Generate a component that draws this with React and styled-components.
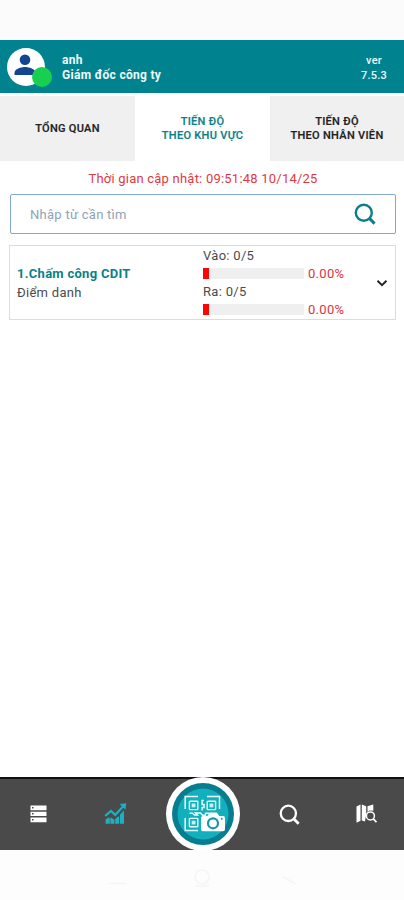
import React from "react";
import styled, { createGlobalStyle } from "styled-components";

const Global = createGlobalStyle`
  * { box-sizing: border-box; }
  body { margin: 0; background: #fff; font-family: Roboto, "Noto Sans", sans-serif; }
`;
const Screen = styled.div`
  width: 404px;
  height: 900px;
  display: flex;
  flex-direction: column;
  background: #fff;
  overflow: hidden;
`;
const StatusBar = styled.div`
  height: 39.5px;
  flex: none;
  background: #fbfbfb;
`;
const Header = styled.header`
  height: 53.5px;
  flex: none;
  display: flex;
  align-items: center;
  background: #00838f;
  color: #eefafa;
  padding: 1px 16px 0 7px;
`;
const Avatar = styled.div`
  position: relative;
  width: 38px;
  height: 38px;
  border-radius: 50%;
  background: #fff;
  svg { display: block; }
`;
const OnlineDot = styled.span`
  position: absolute;
  left: 25px;
  top: 19px;
  width: 20px;
  height: 20px;
  border-radius: 50%;
  background: #18cf50;
`;
const User = styled.div`
  margin-left: 17px;
  flex: 1;
  font-size: 12px;
  font-weight: 700;
  line-height: 15px;
  padding-top: 2px;
  letter-spacing: 0.3px;
`;
const Version = styled.div`
  width: 28px;
  text-align: center;
  font-size: 11px;
  font-weight: 500;
  line-height: 15px;
  padding-top: 2px;
  letter-spacing: 0.2px;
`;
const Tabs = styled.nav`
  flex: none;
  height: 65px;
  margin-top: 3px;
  display: grid;
  grid-template-columns: 135px 135px 134px;
`;
const Tab = styled.div`
  display: flex;
  align-items: center;
  justify-content: center;
  text-align: center;
  background: ${(p) => (p.$active ? "#fff" : "#f0f0f0")};
  color: ${(p) => (p.$active ? "#0b7f88" : "#222")};
  font-size: 11px;
  font-weight: 500;
  line-height: 14px;
  letter-spacing: 0.3px;
  -webkit-text-stroke: 0.2px currentColor;
`;
const Updated = styled.div`
  flex: none;
  height: 33px;
  line-height: 35px;
  padding-left: 2px;
  text-align: center;
  font-size: 13px;
  letter-spacing: 0.22px;
  color: #e2383f;
`;
const Search = styled.div`
  flex: none;
  height: 40px;
  margin: 0 8px 0 10px;
  border: 1px solid #7fa8d2;
  border-radius: 2px;
  display: flex;
  align-items: center;
  justify-content: space-between;
  padding: 0 19px 0 19px;
  font-size: 13px;
  letter-spacing: 0.27px;
  color: #8fa3b5;
  svg { margin-bottom: 1px; }
`;
const Card = styled.div`
  flex: none;
  height: 75px;
  margin: 11px 8px 0 9px;
  border: 1px solid #dcdcdc;
  display: flex;
  align-items: center;
  padding: 0 7px;
`;
const Area = styled.div`
  width: 186px;
  font-size: 13px;
  line-height: 19px;
  letter-spacing: 0.28px;
  color: #4b4b4b;
`;
const AreaName = styled.div`
  font-weight: 700;
  color: #0b7f88;
`;
const Metrics = styled.div`
  flex: 1;
  font-size: 13px;
  line-height: 18px;
  padding-top: 1px;
  letter-spacing: 0.3px;
  color: #4b4b4b;
`;
const MetricRow = styled.div`
  height: 18.5px;
  display: flex;
  align-items: center;
`;
const Bar = styled.div`
  width: 101px;
  height: 11px;
  background: #efefef;
  margin: 0 4px 1px 0;
`;
const Fill = styled.div`
  width: 5.5px;
  height: 11px;
  background: #fb0505;
`;
const Percent = styled.span`
  color: #d9343d;
`;
const Spacer = styled.main`
  flex: 1;
`;
const BottomNav = styled.nav`
  flex: none;
  height: 73px;
  border-top: 2px solid #111;
  background: #4a4a4a;
  display: grid;
  grid-template-columns: 77px 77px 97px 77px 76px;
  align-items: center;
  justify-items: center;
  svg { display: block; }
  > svg { margin-bottom: 2px; }
`;
const Scan = styled.div`
  width: 74px;
  height: 74px;
  margin-top: -2px;
  border-radius: 50%;
  background: #fff;
  display: grid;
  place-items: center;
`;
const SystemNav = styled.div`
  flex: none;
  height: 50px;
  background: #fdfdfd;
  svg { display: block; }
`;

const Magnifier = ({ size, color, weight }) => (
  <svg width={size} height={size} viewBox="0 0 22 22" fill="none" stroke={color} strokeWidth={weight}>
    <circle cx="9.8" cy="9.8" r="8" />
    <path d="M15.4 15.4 20.6 20.6" strokeWidth={weight + 0.5} />
  </svg>
);

const Finder = ({ x, y }) => (
  <g transform={`translate(${x} ${y})`}>
    <rect x="0.7" y="0.7" width="8.4" height="8.4" rx="0.6" fill="none" stroke="#e9feff" strokeWidth="1.4" />
    <rect x="3" y="3" width="3.8" height="3.8" fill="#c4f3f6" />
  </g>
);

const Metric = ({ label, value }) => (
  <>
    <div>{label}</div>
    <MetricRow>
      <Bar><Fill /></Bar>
      <Percent>{value}</Percent>
    </MetricRow>
  </>
);

export default function App() {
  return (
    <Screen>
      <Global />
      <StatusBar />
      <Header>
        <Avatar>
          <svg width="38" height="38" viewBox="0 0 38 38" fill="#12478f">
            <circle cx="18" cy="11.8" r="5.3" />
            <path d="M7.5 27v-2.3c0-3.7 6.5-5.8 10.5-5.8s10.5 2.1 10.5 5.8V27z" />
          </svg>
          <OnlineDot />
        </Avatar>
        <User>
          <div>anh</div>
          <div>Giám đốc công ty</div>
        </User>
        <Version>ver<br />7.5.3</Version>
      </Header>
      <Tabs>
        <Tab>TỔNG QUAN</Tab>
        <Tab $active>TIẾN ĐỘ<br />THEO KHU VỰC</Tab>
        <Tab>TIẾN ĐỘ<br />THEO NHÂN VIÊN</Tab>
      </Tabs>
      <Updated>Thời gian cập nhật: 09:51:48 10/14/25</Updated>
      <Search>
        <span>Nhập từ cần tìm</span>
        <Magnifier size={22} color="#0d7d8c" weight={2.4} />
      </Search>
      <Card>
        <Area>
          <AreaName>1.Chấm công CDIT</AreaName>
          <div>Điểm danh</div>
        </Area>
        <Metrics>
          <Metric label="Vào: 0/5" value="0.00%" />
          <Metric label="Ra: 0/5" value="0.00%" />
        </Metrics>
        <svg width="12" height="8" viewBox="0 0 12 8" fill="none" stroke="#242424" strokeWidth="2">
          <path d="M1.5 1.8 6 6.1l4.5-4.3" />
        </svg>
      </Card>
      <Spacer />
      <BottomNav>
        <svg width="17" height="18" viewBox="0 0 17 18">
          <path fill="#fff" d="M.5.5h16v4.7H.5zM.5 6.7h16v4.4H.5zM.5 12.6h16v4.7H.5z" />
          <path fill="#4a4a4a" d="M2 2h1.5v1.6H2zM2 8h1.5v1.6H2zM2 14h1.5v1.6H2z" />
        </svg>
        <svg width="23" height="22" viewBox="0 0 23 22">
          <path d="M1.2 12.8 7 7.9l4.2 4L19.5 3" fill="none" stroke="#20afc0" strokeWidth="2.2" />
          <path fill="#20afc0" d="m15.6 1 6.6-.8-.7 6.6zM1.6 16.4l3-1.8 1.2 1v5.2H1.6zM6.4 14.2l4 2.6v4h-4zM11.2 16l3.9-3v7.8h-3.9zM16 11.6l4-4v13.2h-4z" />
        </svg>
        <Scan>
          <svg width="62" height="62" viewBox="0 0 62 62">
            <circle cx="31" cy="31" r="31" fill="#087d90" />
            <circle cx="31" cy="31" r="25.5" fill="#12afbd" />
            <g fill="none" stroke="#e9feff" strokeWidth="1.5">
              <path d="M13.2 26V13.5H26M35 13.5h12.5V26M13.2 35v12.5H26" />
            </g>
            <Finder x={16.7} y={17.5} />
            <Finder x={34.5} y={17.5} />
            <Finder x={16.7} y={34.7} />
            <path d="M31.8 17.5h-1.7v4h2v3h-2v3M17.5 30.2h3l2 1.8h3l-2-2h5l2 2.2h3v-2h4" fill="none" stroke="#e9feff" strokeWidth="1.4" />
            <path fill="#fff" d="M31 33h4.4l2.4-3.6h7L47.2 33H51a2 2 0 0 1 2 2v11.3a2 2 0 0 1-2 2H31a2 2 0 0 1-2-2V35a2 2 0 0 1 2-2z" />
            <circle cx="41" cy="40.3" r="5" fill="#fff" stroke="#1199ab" strokeWidth="2.2" />
            <circle cx="49.8" cy="35.8" r="1" fill="#1199ab" />
          </svg>
        </Scan>
        <Magnifier size={21} color="#fff" weight={2.4} />
        <svg width="21" height="20" viewBox="0 0 21 20">
          <path fill="#fff" d="m.5 2.4 4-1.8v16.2l-4 1.9zM5.8.6l4.4 1.6v8.1L9 17.4l-3.2-1zM11.5 2.2l5.8-1.8v6.4l-3.8-.3-2 1.4z" />
          <circle cx="14.4" cy="11.9" r="4" fill="#4a4a4a" stroke="#fff" strokeWidth="1.5" />
          <path d="m17.3 14.8 3.2 3.4" stroke="#fff" strokeWidth="1.8" />
        </svg>
      </BottomNav>
      <SystemNav>
        <svg width="404" height="50" viewBox="0 0 404 50" fill="none" stroke="#f5f5f5" strokeWidth="1.6">
          <path d="M108 33.5h17M283 27l13 7" />
          <circle cx="202" cy="27" r="7" />
          <path d="M195 36h14" />
        </svg>
      </SystemNav>
    </Screen>
  );
}
